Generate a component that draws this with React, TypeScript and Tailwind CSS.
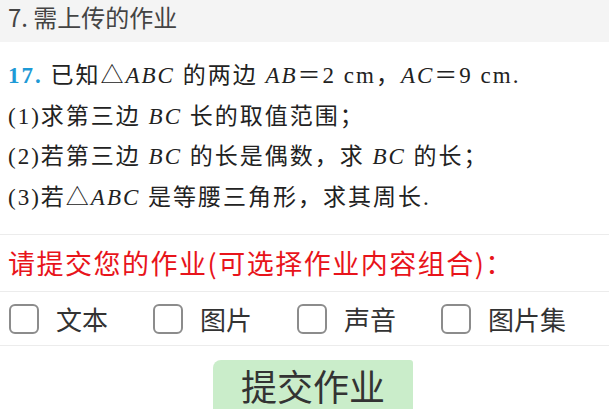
import React from "react";

const sans = { fontFamily: '"Noto Sans CJK SC", "Noto Sans", sans-serif' };

function I({ children }: { children: React.ReactNode }) {
  return <span className="italic">{children}</span>;
}

function Box({ label }: { label: string }) {
  return (
    <div className="flex items-center w-[144px]">
      <div className="w-[30px] h-[30px] rounded-[6px] border-2 border-[#8c8c8c] bg-white shrink-0" />
      <span className="ml-[17px] text-[26px] leading-none text-[#333]">{label}</span>
    </div>
  );
}

export default function App() {
  return (
    <div className="w-[609px] h-[409px] overflow-hidden bg-white" style={sans}>
      <div className="h-[42px] bg-[#f4f4f4] pl-[8px] text-[24px] leading-[34px] text-[#444]">
        7. 需上传的作业
      </div>
      <div
        className="pt-[14px] pb-[16px] pl-[8px] text-[23px] tracking-[2px] leading-[40.5px] text-[#222] border-b border-[#ececec] whitespace-nowrap"
        style={{ fontFamily: '"Liberation Serif", "Noto Sans CJK SC", serif' }}
      >
        <div>
          <span className="font-bold text-[#1e9ad6]">17.</span> 已知△<I>ABC</I> 的两边 <I>AB</I>＝2 cm，<I>AC</I>＝9 cm.
        </div>
        <div>(1)求第三边 <I>BC</I> 长的取值范围；</div>
        <div>(2)若第三边 <I>BC</I> 的长是偶数，求 <I>BC</I> 的长；</div>
        <div>(3)若△<I>ABC</I> 是等腰三角形，求其周长.</div>
      </div>
      <div className="h-[57px] flex items-center pl-[8px] text-[27px] tracking-[1.5px] text-[#e8141b] border-b border-[#ececec] whitespace-nowrap">
        请提交您的作业(可选择作业内容组合)：
      </div>
      <div className="h-[54px] flex items-center pl-[9px] border-b border-[#ececec]">
        <Box label="文本" />
        <Box label="图片" />
        <Box label="声音" />
        <Box label="图片集" />
      </div>
      <div className="pt-[14px] pl-[213px]">
        <div className="w-[200px] h-[50px] bg-[#caedca] rounded-tl-[8px] rounded-tr-[3px] flex items-center justify-center text-[36px] leading-none text-[#333]">
          提交作业
        </div>
      </div>
    </div>
  );
}
